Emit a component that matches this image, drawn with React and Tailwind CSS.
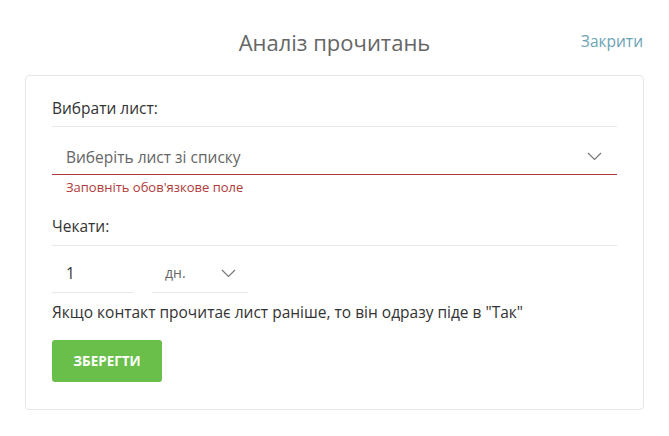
import { useState } from "react";

function Chevron() {
  return (
    <svg width="15" height="9" viewBox="0 0 15 9" fill="none">
      <path d="M1 1 L7.5 7.5 L14 1" stroke="#777" strokeWidth="1.2" />
    </svg>
  );
}

export default function App() {
  const [days, setDays] = useState("1");

  return (
    <div
      className="h-[436px] w-[669px] bg-white text-[#333]"
      style={{ fontFamily: '"Open Sans", "Noto Sans", sans-serif' }}
    >
      {/* шапка */}
      <div className="relative flex h-[75px] items-center justify-center">
        <h1 className="pt-[9px] text-[22px] font-normal text-[#666]">Аналіз прочитань</h1>
        <button className="absolute right-[26px] top-[30px] text-[15.5px] text-[#6aa3b6]">
          Закрити
        </button>
      </div>

      <div className="mx-[25px] rounded-[4px] border border-[#e6e6e6] px-[26px] pt-[22px] pb-[27px] text-[15.5px] leading-[20px]">
        <div className="border-b border-[#e8e8e8] pb-[8px]">Вибрати лист:</div>

        <div className="flex h-[48px] items-center justify-between border-b border-[#a63a3a] pt-[12px] pl-[14px] pr-[15px]">
          <span className="text-[#666]">Виберіть лист зі списку</span>
          <Chevron />
        </div>
        <div className="pt-[3px] pl-[14px] text-[13px] leading-[18px] text-[#b03a3a]">
          Заповніть обов'язкове поле
        </div>

        <div className="mt-[20px] border-b border-[#e8e8e8] pb-[9px]">Чекати:</div>

        <div className="flex gap-[18px]">
          <input
            value={days}
            onChange={(e) => setDays(e.target.value)}
            className="h-[47px] w-[82px] border-b border-[#e8e8e8] pt-[8px] pl-[14px] outline-none"
          />
          <div className="flex h-[47px] w-[96px] items-center justify-between border-b border-[#e8e8e8] pt-[8px] pl-[13px] pr-[12px]">
            <span className="text-[14px] text-[#666]">дн.</span>
            <Chevron />
          </div>
        </div>

        <p className="mt-[9px]">
          Якщо контакт прочитає лист раніше, то він одразу піде в "Так"
        </p>

        <button className="mt-[18px] block h-[42px] w-[110px] rounded-[3px] bg-[#6abf4b] text-[13.5px] font-bold text-white">
          ЗБЕРЕГТИ
        </button>
      </div>
    </div>
  );
}
